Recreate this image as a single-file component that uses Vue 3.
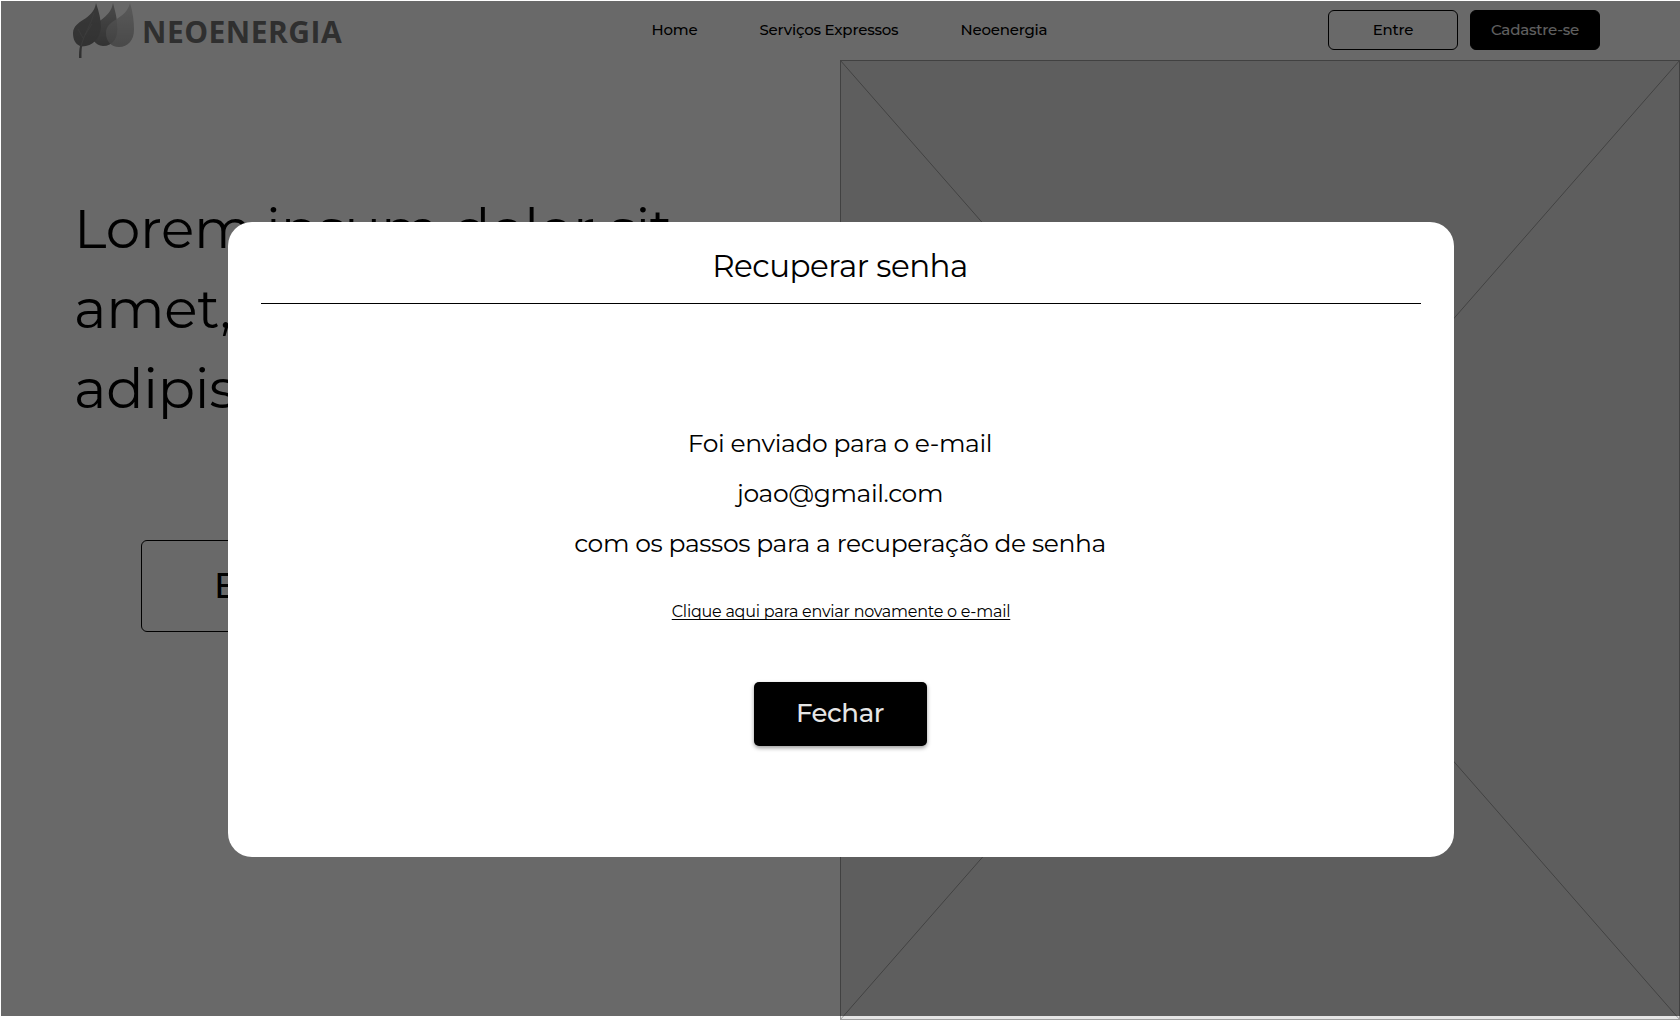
<script setup>
const links = ['Home', 'Serviços Expressos', 'Neoenergia']
const message = [
  'Foi enviado para o e-mail',
  'joao@gmail.com',
  'com os passos para a recuperação de senha',
]
</script>

<template>
  <div class="page">
    <header class="bar">
      <div class="logo">
        <svg class="leaves" width="64" height="60" viewBox="0 0 64 60">
          <defs>
            <linearGradient id="g1" x1="0" y1="0" x2="0" y2="1">
              <stop offset="0" stop-color="#8a8a8a" /><stop offset="1" stop-color="#757575" />
            </linearGradient>
            <linearGradient id="g2" x1="0" y1="0" x2="0" y2="1">
              <stop offset="0" stop-color="#b4b4b4" /><stop offset="1" stop-color="#7c7c7c" />
            </linearGradient>
            <linearGradient id="g3" x1="0" y1="0" x2="0" y2="1">
              <stop offset="0" stop-color="#d4d4d4" /><stop offset="1" stop-color="#a4a4a4" />
            </linearGradient>
          </defs>
          <path d="M41 3C43 11 45 17 45 24C47 38 41 46 31 46C23 45 19 39 20 32C21 20 38 20 41 3Z" fill="url(#g2)" />
          <path d="M58 3C61 12 62 22 62 30C62 40 56 47 47 47C39 47 34 41 34 33C34 19 54 20 58 3Z" fill="url(#g3)" fill-opacity=".85" />
          <path d="M24 3C27 12 29 20 29 27C28 39 21 46 10 46.500C9.500 50 9.500 54 9.500 58H7C7 54 7 50 8 46C3 44 1 39 1 33C2 19 21 21 24 3Z" fill="url(#g1)" />
          <path d="M22 13C19 25 12 34 9 46M6 29L11 38M20 24L13 35" fill="none" stroke="#959595" stroke-width=".7" />
        </svg>
        <span class="brand">NEOENERGIA</span>
      </div>
      <nav class="nav">
        <a v-for="label in links" :key="label">{{ label }}</a>
      </nav>
      <div class="account">
        <button class="btn">Entre</button>
        <button class="btn dark">Cadastre-se</button>
      </div>
    </header>
    <main class="hero">
      <section class="copy">
        <h1>Lorem ipsum dolor sit<br />amet, consectetur<br />adipiscing elit</h1>
        <button class="cta">Entre</button>
      </section>
      <svg class="placeholder" width="840" height="960" viewBox="0 0 840 960">
        <rect x=".5" y=".5" width="839" height="959" fill="#e5e5e5" stroke="#9f9f9f" />
        <path d="M0 0L840 960M840 0L0 960" stroke="#9f9f9f" fill="none" />
      </svg>
    </main>
    <div class="shade"></div>
    <div class="dialog" role="dialog">
      <h2>Recuperar senha</h2>
      <div class="message">
        <p v-for="line in message" :key="line">{{ line }}</p>
      </div>
      <a class="resend">Clique aqui para enviar novamente o e-mail</a>
      <button class="close">Fechar</button>
    </div>
  </div>
</template>

<style>
body { margin: 0; background: #fff; overflow: hidden; }
</style>

<style scoped>
.page { position: relative; width: 1680px; height: 1020px; overflow: hidden; background: #fff; color: #000; font-family: Montserrat, Inter, sans-serif; }
button { box-sizing: border-box; padding: 0; font-family: inherit; color: #000; background: transparent; border: 1px solid #000; }
h1, h2, p { margin: 0; font-weight: 400; }
.bar { height: 60px; display: flex; align-items: flex-start; }
.logo { width: 579.5px; padding-left: 72px; display: flex; }
.leaves { flex: none; }
.brand { margin: 12px 0 0 6px; font: 700 30px/40px "Open Sans", sans-serif; letter-spacing: .5px; color: #737373; }
.nav { width: 676.5px; height: 60px; display: flex; gap: 62px; font-size: 15px; line-height: 60px; font-weight: 500; letter-spacing: -.2px; white-space: nowrap; }
.nav a { flex: none; }
.account { display: flex; gap: 12px; padding-top: 10px; }
.btn { width: 130px; height: 40px; padding-bottom: 2px; border-radius: 6px; font-size: 15px; font-weight: 500; letter-spacing: -.2px; }
.dark { background: #000; color: #e8e8e8; }
.hero { display: flex; justify-content: space-between; }
.copy { width: 800px; padding: 129px 0 0 74px; box-sizing: border-box; }
h1 { font-size: 55px; line-height: 80px; letter-spacing: -.28px; white-space: nowrap; }
.cta { display: block; width: 300px; height: 92px; margin: 111px 0 0 67px; padding: 0 0 1px 72px; text-align: left; border-radius: 6px; font-size: 35px; font-weight: 500; }
.placeholder { flex: none; }
.shade { position: absolute; left: .6px; top: 1px; right: 0; height: 1015px; background: rgba(0, 0, 0, .588); }
.dialog { position: absolute; left: 228px; top: 222px; width: 1226px; height: 635px; box-sizing: border-box; padding: 0 33px; background: #fff; border-radius: 24px; display: flex; flex-direction: column; align-items: center; }
h2 { align-self: stretch; height: 81px; padding-right: 2px; border-bottom: 1px solid #000; text-align: center; font-size: 31px; line-height: 89px; letter-spacing: -.5px; }
.message { margin: 114px 2px 0 0; font-size: 25px; line-height: 50px; letter-spacing: -.39px; text-align: center; white-space: nowrap; }
.resend { margin-top: 32px; font-size: 16px; line-height: 24px; letter-spacing: -.25px; white-space: nowrap; text-decoration: underline; text-decoration-thickness: 1px; text-underline-offset: 2px; text-decoration-skip-ink: none; }
.close { width: 173px; height: 64px; margin: 58px 2px 0 0; padding-bottom: 3px; border: 0; border-radius: 5px; background: #000; color: #e6e6e6; font-size: 26px; font-weight: 500; letter-spacing: -.4px; box-shadow: 0 2px 4px rgba(0, 0, 0, .4); }
</style>
